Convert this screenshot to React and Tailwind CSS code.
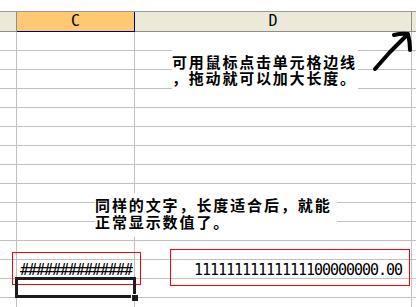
const ROWS = 15;
const HASH_ROW = 12;

const mono = { fontFamily: '"DejaVu Sans Mono", "Liberation Mono", monospace' };
const cjk = { fontFamily: '"Noto Sans CJK SC", "Noto Sans", sans-serif' };

function Row({ index }) {
  const isData = index === HASH_ROW;
  return (
    <div className="flex h-[19px] border-b border-[#c0c0c0]">
      <div className="w-[17px] shrink-0 border-r border-[#c0c0c0]" />
      <div className="w-[118px] shrink-0 border-r border-[#c0c0c0] flex items-end pl-[3px]">
        {isData && (
          <span className="text-[15px] leading-[15px] tracking-[-1.03px] text-black" style={mono}>
            ##############
          </span>
        )}
      </div>
      <div className="w-[277px] shrink-0 border-r border-[#c0c0c0] flex items-end justify-end pr-[9px]">
        {isData && (
          <span className="text-[15px] leading-[15px] tracking-[-1.03px] text-black" style={mono}>
            11111111111111100000000.00
          </span>
        )}
      </div>
      <div className="flex-1" />
    </div>
  );
}

export default function App() {
  return (
    <div className="relative w-[416px] h-[307px] overflow-hidden bg-white select-none">
      <div className="h-[11px]" />

      {/* column headers */}
      <div className="flex border-t border-[#9a9a9a] bg-[#ece9d8]">
        <div className="w-[17px] h-[20px] shrink-0 border-r border-b border-[#8e8e8e]" />
        <div
          className="w-[118px] h-[20px] shrink-0 border-r border-b border-[#000080] bg-[#ffc873] flex items-center justify-center text-[15px] text-black"
          style={mono}
        >
          C
        </div>
        <div
          className="w-[277px] h-[20px] shrink-0 border-r border-b border-[#8e8e8e] flex items-center justify-center text-[15px] text-black"
          style={mono}
        >
          D
        </div>
        <div className="flex-1 h-[20px] border-b border-[#8e8e8e]" />
      </div>

      {/* grid */}
      <div className="flex flex-col">
        {Array.from({ length: ROWS }).map((_, i) => (
          <Row key={i} index={i} />
        ))}
      </div>

      {/* note 1 */}
      <div
        className="absolute left-[172px] top-[50px] w-[186px] h-[39px] bg-white pt-[4px] text-[15px] leading-[16px] tracking-[1.8px] font-bold text-black whitespace-nowrap"
        style={cjk}
      >
        <div>可用鼠标点击单元格边线</div>
        <div>，拖动就可以加大长度。</div>
      </div>

      {/* arrow */}
      <svg className="absolute left-0 top-0" width="416" height="307" viewBox="0 0 416 307">
        <g fill="none" stroke="#000" strokeWidth="4" strokeLinecap="round" strokeLinejoin="round">
          <path d="M375 69 L390 52 L406 36" />
          <path d="M394 35 Q402 33 408 34 Q410 42 410 50" />
        </g>
      </svg>

      {/* note 2 */}
      <div
        className="absolute left-[95px] top-[193px] w-[242px] h-[44px] bg-white pt-[3px] text-[15px] leading-[17px] tracking-[1.9px] font-bold text-black whitespace-nowrap"
        style={cjk}
      >
        <div>同样的文字，长度适合后，就能</div>
        <div>正常显示数值了。</div>
      </div>

      {/* red marks */}
      <div className="absolute left-[12px] top-[252px] w-[129px] h-[33px] border border-[#ff0000]" />
      <div className="absolute left-[170px] top-[249px] w-[240px] h-[37px] border border-[#ff0000]" />

      {/* selected cell */}
      <div className="absolute left-[15px] top-[277px] w-[121px] h-[21px] border-[3px] border-[#1c1c1c]" />
      <div className="absolute left-[131px] top-[294px] w-[7px] h-[7px] bg-[#1c1c1c] border-l border-t border-white" />
    </div>
  );
}
